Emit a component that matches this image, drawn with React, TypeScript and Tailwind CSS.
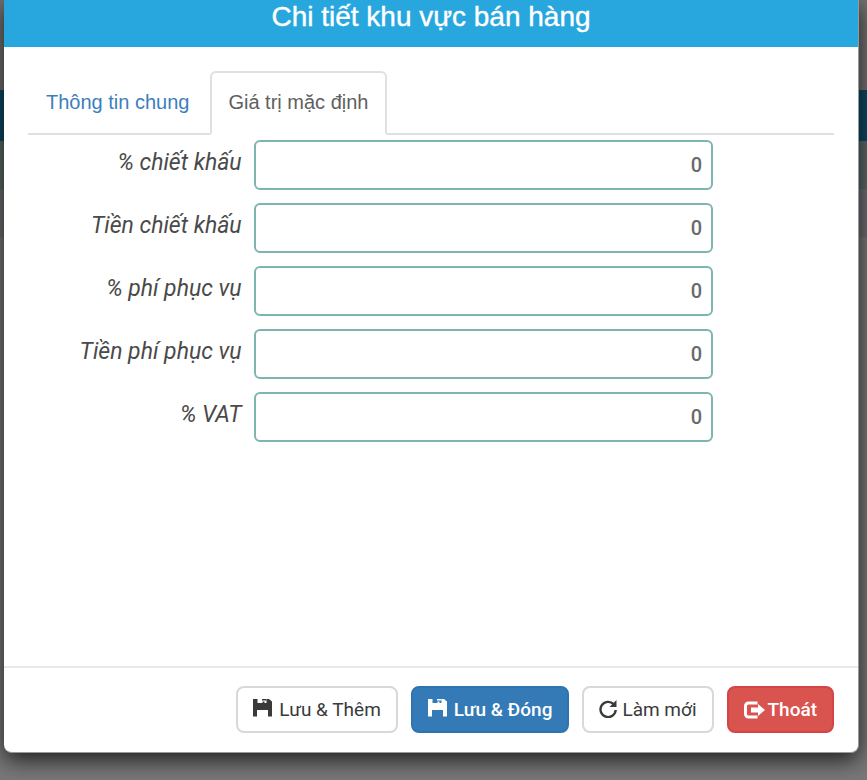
import { useState, type ReactNode } from "react";

const tabs = ["Thông tin chung", "Giá trị mặc định"];

const fields = [
  { id: "discount-percent", label: "% chiết khấu" },
  { id: "discount-amount", label: "Tiền chiết khấu" },
  { id: "service-percent", label: "% phí phục vụ" },
  { id: "service-amount", label: "Tiền phí phục vụ" },
  { id: "vat-percent", label: "% VAT" },
];

function SaveIcon() {
  return (
    <svg viewBox="0 0 19 18" className="mb-1 h-[18px] w-[19px]" fill="currentColor" aria-hidden="true">
      <path d="M0 0h4.500v4h5V2.500h2V4h2V0h2.500L19 2.500V17.500h-4V11H4v6.500H0z" />
      <path d="M9 0h4.500v1.500H9z" />
    </svg>
  );
}

function ReloadIcon() {
  return (
    <svg viewBox="0 0 18 18" className="mb-0.5 h-[18px] w-[18px]" aria-hidden="true">
      <path
        d="M14.600 4.200A7.600 7.600 0 1 0 16.700 10"
        fill="none"
        stroke="currentColor"
        strokeWidth="2.400"
      />
      <path d="M17.500 0v7h-7z" fill="currentColor" />
    </svg>
  );
}

function LogoutIcon() {
  return (
    <svg viewBox="0 0 21 18" className="h-[18px] w-[21px]" aria-hidden="true">
      <path
        d="M13.500 2H4.500A3 3 0 0 0 1.500 5v8a3 3 0 0 0 3 3h9"
        fill="none"
        stroke="currentColor"
        strokeWidth="3"
      />
      <path d="M7 6.500h7V3l7 6-7 6v-3.500H7z" fill="currentColor" />
    </svg>
  );
}

function ActionButton({ tone, icon, children }: { tone: string; icon: ReactNode; children: ReactNode }) {
  return (
    <button
      type="button"
      className={`flex h-[47px] items-center whitespace-nowrap rounded-lg border-2 px-[15px] font-[Roboto,sans-serif] text-[19px] leading-7 ${tone}`}
    >
      {icon}
      {children}
    </button>
  );
}

export default function App() {
  const [active, setActive] = useState(1);

  return (
    <div className="relative min-h-screen overflow-hidden bg-[#787878] font-['Liberation_Sans',Arial,sans-serif]">
      <div className="absolute inset-x-0 top-0" aria-hidden="true">
        <div className="h-[90px] bg-[#727272]" />
        <div className="h-[51px] bg-[#0d4963]" />
        <div className="h-12 bg-[#5b6a69]" />
        <div className="h-12 bg-[#6c6f73]" />
      </div>

      <div
        role="dialog"
        aria-labelledby="dialog-title"
        className="relative ml-1 mr-2 rounded-b-lg border-b border-r border-[#999] bg-white shadow-[0_7px_22px_rgba(0,0,0,0.75)]"
      >
        <header className="flex h-[47px] justify-center bg-[#27a7de]">
          <h1 id="dialog-title" className="text-[28px] leading-[34px] text-white [-webkit-text-stroke:0.4px_white]">
            Chi tiết khu vực bán hàng
          </h1>
        </header>

        <div className="h-[619px] px-6 pt-6">
          <div role="tablist" className="flex gap-[3px] border-b-2 border-[#e0e0e0]">
            {tabs.map((tab, i) => (
              <button
                key={tab}
                type="button"
                role="tab"
                aria-selected={i === active}
                onClick={() => setActive(i)}
                className={`-mb-0.5 h-16 rounded-t-md border-2 px-4 pb-0.5 text-[20px] leading-7 ${
                  i === active
                    ? "border-[#e0e0e0] border-b-white bg-white text-[#606060]"
                    : "border-transparent text-[#3b80bd]"
                }`}
              >
                {tab}
              </button>
            ))}
          </div>

          <form className="flex flex-col gap-[13px] pt-[5px]">
            {fields.map((field) => (
              <div key={field.id} className="flex">
                <label
                  htmlFor={field.id}
                  className="w-[28%] pr-3 pt-[9px] text-right font-[Roboto,sans-serif] text-[23px] italic leading-7 text-[#4a4a4a]"
                >
                  {field.label}
                </label>
                <input
                  id={field.id}
                  type="text"
                  inputMode="numeric"
                  defaultValue="0"
                  className="h-[50px] w-[57%] rounded-md border-2 border-[#7db5b1] bg-white px-[9px] text-right font-[Roboto,sans-serif] text-[20px] font-medium text-[#6a6a6a] outline-none"
                />
              </div>
            ))}
          </form>
        </div>

        <footer className="flex justify-end gap-[13px] border-t-2 border-[#e8e8e8] px-6 pb-[19px] pt-[18px]">
          <ActionButton
            tone="border-[#d8d8d8] bg-white text-[#3a3a3a] gap-[7px]"
            icon={<SaveIcon />}
          >
            Lưu &amp; Thêm
          </ActionButton>
          <ActionButton
            tone="border-[#2e74b0] bg-[#337ab7] font-medium text-white gap-[7px]"
            icon={<SaveIcon />}
          >
            Lưu &amp; Đóng
          </ActionButton>
          <ActionButton
            tone="border-[#d8d8d8] bg-white text-[#3a3a3a] gap-[5px]"
            icon={<ReloadIcon />}
          >
            Làm mới
          </ActionButton>
          <ActionButton
            tone="border-[#d64545] bg-[#d9534f] font-medium text-white gap-[3px]"
            icon={<LogoutIcon />}
          >
            Thoát
          </ActionButton>
        </footer>
      </div>
    </div>
  );
}
